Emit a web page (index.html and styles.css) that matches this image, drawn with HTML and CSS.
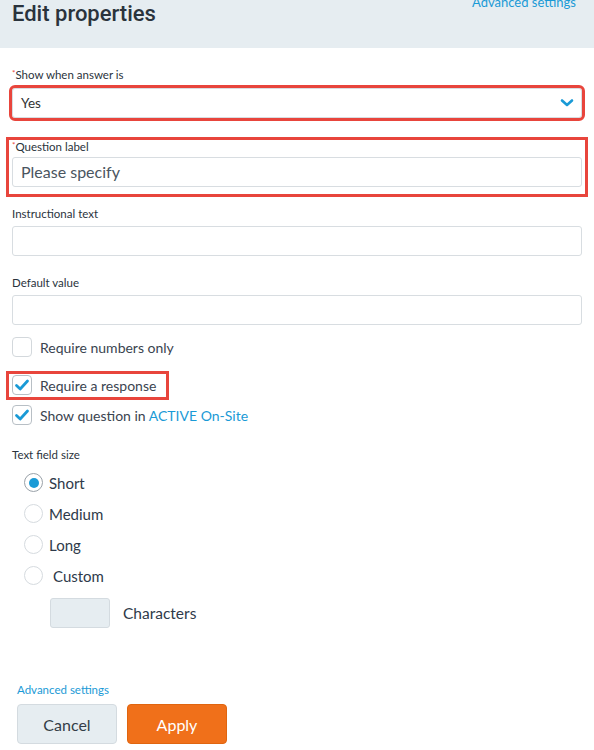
FILE: index.html
```html
<!DOCTYPE html>
<html>
<head>
<meta charset="utf-8">
<link rel="stylesheet" href="styles.css">
</head>
<body>
<header class="head">
  <h1 class="title">Edit properties</h1>
  <a class="link head-link">Advanced settings</a>
</header>
<form class="form">
  <div class="field f1">
    <label class="lbl"><span class="req">*</span>Show when answer is</label>
    <div class="select hl-outline">
      <span>Yes</span>
      <svg class="chev" width="14" height="10" viewBox="0 0 14 10"><path d="M2 2.5 L7 7 L12 2.5" fill="none" stroke="#1a9ad6" stroke-width="2.6" stroke-linecap="round" stroke-linejoin="round"/></svg>
    </div>
  </div>
  <div class="field f2 hl-box">
    <label class="lbl"><span class="req">*</span>Question label</label>
    <div class="input big">Please specify</div>
  </div>
  <div class="field f3">
    <label class="lbl">Instructional text</label>
    <div class="input"></div>
  </div>
  <div class="field f4">
    <label class="lbl">Default value</label>
    <div class="input"></div>
  </div>
  <div class="checks">
    <div class="check"><span class="box"></span><span>Require numbers only</span></div>
    <div class="check hl-check"><span class="box on"><svg width="16" height="14" viewBox="0 0 16 14"><path d="M2.5 7.5 L6.2 11 L13.5 3" fill="none" stroke="#1a9ad6" stroke-width="2.8" stroke-linecap="round" stroke-linejoin="round"/></svg></span><span>Require a response</span></div>
    <div class="check"><span class="box on"><svg width="16" height="14" viewBox="0 0 16 14"><path d="M2.5 7.5 L6.2 11 L13.5 3" fill="none" stroke="#1a9ad6" stroke-width="2.8" stroke-linecap="round" stroke-linejoin="round"/></svg></span><span>Show question in <a class="link">ACTIVE On-Site</a></span></div>
  </div>
  <div class="lbl tfs">Text field size</div>
  <div class="radios">
    <div class="radio"><span class="dot on"></span><span>Short</span></div>
    <div class="radio"><span class="dot"></span><span>Medium</span></div>
    <div class="radio"><span class="dot"></span><span>Long</span></div>
    <div class="radio"><span class="dot"></span><span class="custom">Custom</span></div>
  </div>
  <div class="chars"><span class="charbox"></span><span>Characters</span></div>
  <a class="link foot-link">Advanced settings</a>
  <div class="buttons">
    <button type="button" class="btn cancel">Cancel</button>
    <button type="button" class="btn apply">Apply</button>
  </div>
</form>
</body>
</html>
```
FILE: styles.css
```css
* { box-sizing: border-box; }
body {
  margin: 0;
  font-family: Lato, "Open Sans", Arial, sans-serif;
  color: #323c47;
  background: #fff;
}
.head {
  height: 48px;
  background: #e6edf1;
  display: flex;
  justify-content: space-between;
  align-items: flex-start;
  padding: 0 18px 0 12px;
}
.title {
  margin: 0;
  font-family: Roboto, Lato, sans-serif;
  font-size: 22px;
  font-weight: 500;
  line-height: 27px;
  color: #2a333c;
}
.link { color: #1a9ad6; text-decoration: none; }
.head-link {
  font-size: 13px;
  margin-top: -6px;
  line-height: 16px;
}
.form { padding: 0 12px; }
.lbl {
  display: block;
  font-size: 11.5px;
  line-height: 14px;
  color: #2a333c;
}
.req { color: #e8453c; font-size: 8px; vertical-align: top; line-height: 10px; }
.f1 { margin-top: 20px; }
.f1 .lbl { margin-bottom: 6px; }
.select {
  height: 30px;
  border: 1px solid #d8dde1;
  border-radius: 3px;
  display: flex;
  align-items: center;
  justify-content: space-between;
  padding: 0 7px 0 8px;
  font-size: 13.5px;
  color: #333;
}
.hl-outline { outline: 3px solid #e8453c; outline-offset: 0px; }
.hl-box {
  border: 3px solid #e8453c;
  margin: 19px -6px 0;
  padding: 0 3px 7px;
}
.f2 .lbl { margin-bottom: 3px; }
.input {
  height: 30px;
  border: 1px solid #d8dde1;
  border-radius: 3px;
  background: #fff;
}
.input.big {
  font-size: 16px;
  color: #4a5560;
  padding: 0 8px;
  line-height: 28px;
}
.f3 { margin-top: 10px; }
.f3 .lbl, .f4 .lbl { margin-bottom: 5px; }
.f4 { margin-top: 20px; }
.checks { margin-top: 12px; display: flex; flex-direction: column; }
.check {
  display: flex;
  align-items: center;
  gap: 8px;
  font-size: 14px;
  color: #3a4450;
  height: 20px;
}
.check + .check { margin-top: 14px; }
.hl-check {
  align-self: flex-start;
  border: 3px solid #e8453c;
  height: 29px;
  margin: 3px 0 0 -6px;
  padding: 1px 10px 2px 3px;
}
.hl-check + .check { margin-top: 5px; }
.box {
  width: 20px;
  height: 20px;
  border: 1px solid #d3d8dc;
  border-radius: 4px;
  background: #fff;
  display: flex;
  align-items: center;
  justify-content: center;
  flex: none;
}
.box.on { border-color: #b8bfc5; }
.tfs { margin-top: 23px; }
.radios { margin-top: 11px; padding-left: 12px; display: flex; flex-direction: column; gap: 12px; }
.radio {
  display: flex;
  align-items: center;
  gap: 6px;
  font-size: 15px;
  color: #2e3a4a;
  height: 19px;
}
.dot {
  width: 19px;
  height: 19px;
  border-radius: 50%;
  border: 1px solid #d6dbdf;
  background: #fff;
  display: flex;
  align-items: center;
  justify-content: center;
  flex: none;
}
.dot.on { border-color: #9aa2a9; }
.dot.on::after {
  content: "";
  width: 10px;
  height: 10px;
  border-radius: 50%;
  background: #1a9ad6;
}
.custom { margin-left: 4px; }
.chars {
  display: flex;
  align-items: center;
  gap: 13px;
  margin: 13px 0 0 38px;
  font-size: 15.5px;
  color: #2e3a4a;
}
.charbox {
  width: 60px;
  height: 30px;
  background: #e6edf1;
  border: 1px solid #d4dbe0;
  border-radius: 3px;
}
.foot-link {
  display: block;
  font-size: 11.5px;
  line-height: 14px;
  margin: 55px 0 0 5px;
}
.buttons { display: flex; gap: 10px; margin: 7px 0 0 5px; }
.btn {
  width: 100px;
  height: 40px;
  border-radius: 4px;
  font-family: inherit;
  font-size: 16px;
  cursor: pointer;
}
.cancel { background: #e6edf1; border: 1px solid #d4dbe0; color: #333d47; }
.apply { background: #f0701a; border: 1px solid #e0650f; color: #fff; }
```
